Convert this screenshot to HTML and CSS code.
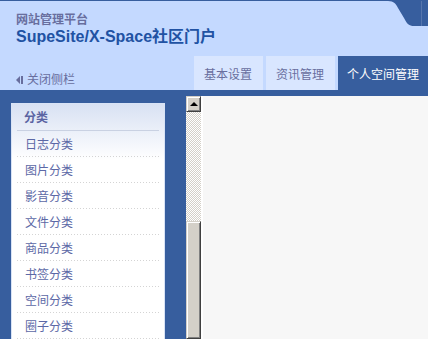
FILE: index.html
```html
<!DOCTYPE html>
<html lang="zh-CN">
<head>
  <meta charset="UTF-8" />
  <title>网站管理平台</title>
  <link rel="stylesheet" href="styles.css">
</head>
<body>

  <div class="header">
    <svg class="corner" width="40" height="26" viewBox="0 0 40 26">
      <path d="M0 0 C6 0 8 3 10 7 L16 17 C19 23 21 25 26 25 H40 V0 Z" fill="#375e9e"/>
      <rect x="33" y="0" width="1" height="25" fill="#5676ad"/>
    </svg>

    <div class="brand">
      <div class="brand-sub">网站管理平台</div>
      <div class="brand-name">SupeSite/X-Space社区门户</div>
    </div>

    <div class="nav">
      <a class="toggle"><span class="arrow"></span><span class="bar"></span>关闭侧栏</a>
      <div class="tabs">
        <a class="tab">基本设置</a>
        <a class="tab">资讯管理</a>
        <a class="tab active">个人空间管理</a>
      </div>
    </div>
  </div>

  <div class="main">
    <div class="side">
      <div class="panel">
        <div class="panel-title">分类</div>
        <ul class="menu">
          <li>日志分类</li>
          <li>图片分类</li>
          <li>影音分类</li>
          <li>文件分类</li>
          <li>商品分类</li>
          <li>书签分类</li>
          <li>空间分类</li>
          <li>圈子分类</li>
        </ul>
      </div>
    </div>

    <div class="frame">
      <div class="scrollbar">
        <div class="sb-btn"><span class="sb-arrow"></span></div>
        <div class="sb-track"></div>
        <div class="sb-thumb"></div>
      </div>
      <div class="content"></div>
    </div>
  </div>

</body>
</html>
```

FILE: styles.css
```css
html, body {
  margin: 0;
  padding: 0;
  height: 100%;
  overflow: hidden;
}

body {
  font-family: "Liberation Sans", "Noto Sans CJK SC", sans-serif;
  font-size: 12px;
  background: #375e9e;
  display: flex;
  flex-direction: column;
}

a {
  text-decoration: none;
  cursor: pointer;
}

.header {
  position: relative;
  height: 89px;
  border-top: 1px solid #375e9e;
  background: #c4d9ff;
  display: flex;
  flex-direction: column;
  justify-content: space-between;
}

.corner {
  position: absolute;
  top: 0;
  right: 0;
}

.brand {
  padding: 12px 0 0 16px;
}

.brand-sub {
  font-weight: bold;
  font-size: 12px;
  line-height: 14px;
  color: #686e9e;
}

.brand-name {
  margin-top: 1px;
  font-weight: bold;
  font-size: 16px;
  line-height: 18px;
  color: #2152a3;
}

.nav {
  display: flex;
  justify-content: space-between;
  height: 34px;
}

.toggle {
  align-self: flex-end;
  display: flex;
  align-items: center;
  padding: 0 0 3px 16px;
  line-height: 14px;
  color: #686e9e;
}

.toggle .arrow {
  width: 0;
  height: 0;
  border-top: 4px solid transparent;
  border-bottom: 4px solid transparent;
  border-right: 4px solid #686e9e;
}

.toggle .bar {
  width: 2px;
  height: 8px;
  background: #686e9e;
  margin: 0 4px 0 1px;
}

.tabs {
  display: flex;
  gap: 3px;
}

.tab {
  display: flex;
  align-items: center;
  padding: 0 11px 0 10px;
  background: #d9e6ff;
  color: #686e9e;
}

.tab.active {
  padding: 0 9px;
  background: #375e9e;
  color: #fff;
}

.main {
  flex: 1;
  display: flex;
  padding-top: 6px;
  min-height: 0;
}

.side {
  width: 186px;
  flex: none;
}

.panel {
  margin: 7px 21px 0 11px;
  height: 100%;
  border: 1px solid #d8e3f6;
  border-bottom: none;
  padding: 0 5px;
  background: linear-gradient(#d8e1f3, #fff 56px) no-repeat, #fff;
}

.panel-title {
  height: 26px;
  line-height: 29px;
  padding-left: 7px;
  font-weight: bold;
  color: #5b64a2;
  border-bottom: 1px solid #c9d1e2;
}

.menu {
  list-style: none;
  margin: 0;
  padding: 0;
}

.menu li {
  height: 25px;
  line-height: 28px;
  padding-left: 8px;
  color: #5c68a6;
  background: linear-gradient(to right, #d4d4d4 1px, transparent 1px) repeat-x left bottom / 3px 1px;
  padding-bottom: 1px;
  overflow: hidden;
}

.frame {
  flex: 1;
  display: flex;
  min-width: 0;
}

.scrollbar {
  width: 15px;
  flex: none;
  display: flex;
  flex-direction: column;
}

.sb-btn {
  height: 16px;
  box-sizing: border-box;
  background: #d4d0c8;
  border: 1px solid;
  border-color: #d4d0c8 #404040 #404040 #d4d0c8;
  box-shadow: inset 1px 1px 0 #fff, inset -1px -1px 0 #808080;
  display: flex;
  align-items: center;
  justify-content: center;
}

.sb-arrow {
  width: 0;
  height: 0;
  border-left: 4px solid transparent;
  border-right: 4px solid transparent;
  border-bottom: 4px solid #000;
  margin-top: -1px;
}

.sb-track {
  height: 109px;
  background: repeating-conic-gradient(#d4d0c8 0 25%, #fff 0 50%) 0 0 / 2px 2px;
}

.sb-thumb {
  flex: 1;
  box-sizing: border-box;
  background: #d4d0c8;
  border: 1px solid;
  border-color: #d4d0c8 #404040 #404040 #d4d0c8;
  box-shadow: inset 1px 1px 0 #fff, inset -1px -1px 0 #808080;
}

.content {
  flex: 1;
  background: #f7f7f7;
  border-left: 2px solid #fff;
}
```
